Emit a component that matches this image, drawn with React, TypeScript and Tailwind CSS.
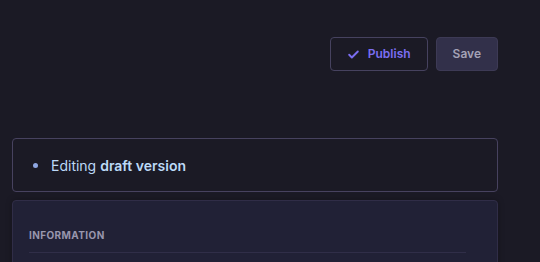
import React from "react";

const App = () => {
  return (
    <div
      className="w-[540px] h-[262px] overflow-hidden bg-[#1b1a25] pl-3 pr-[42px]"
      style={{ fontFamily: "Inter, 'Liberation Sans', sans-serif" }}
    >
      <div className="flex justify-end gap-2 pt-[37px]">
        <button className="flex h-[34px] items-center gap-2 rounded-[4px] border border-[#46425f] bg-[#1b1a25] pl-4 pr-4 text-[12px] font-semibold text-[#7b6ef2]">
          <svg width="13" height="13" viewBox="0 0 24 24" fill="none" stroke="#7b6ef2" strokeWidth="3.5" strokeLinecap="round" strokeLinejoin="round">
            <path d="M4 12.5l5 5L20 6.5" />
          </svg>
          Publish
        </button>
        <button className="flex h-[34px] items-center rounded-[4px] border border-[#3d3a55] bg-[#32304a] px-4 text-[12px] font-semibold text-[#a4a2b6]">
          Save
        </button>
      </div>

      <div className="mt-[67px] flex h-[54px] items-center gap-[13px] rounded-[4px] border border-[#47425f] bg-[#1b1a25] pl-5">
        <span className="h-[5px] w-[5px] rounded-full bg-[#8fa7e2]" />
        <span className="text-[14px] text-[#bcd9f7]">
          Editing <span className="font-semibold">draft version</span>
        </span>
      </div>

      <div className="mt-2 h-[80px] rounded-[4px] border border-[#302d47] bg-[#212136] pl-4 pr-[31px] pt-[27px] shadow-[0_0_6px_rgba(0,0,0,0.25)]">
        <div className="text-[10px] font-bold tracking-[0.04em] text-[#9896ad]">INFORMATION</div>
        <div className="mt-[9px] h-px bg-[#302e48]" />
      </div>
    </div>
  );
};

export default App;
